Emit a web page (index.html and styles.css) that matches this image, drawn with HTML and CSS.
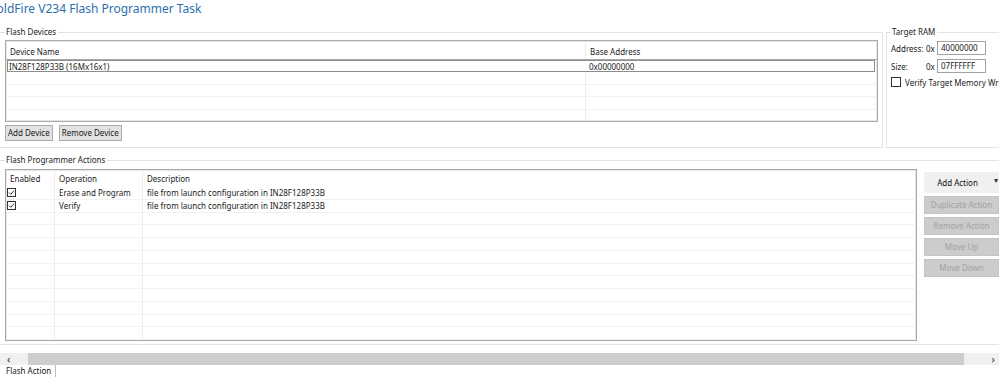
FILE: index.html
```html
<!DOCTYPE html>
<html>
<head>
<meta charset="utf-8">
<link rel="stylesheet" href="styles.css">
</head>
<body>
<div class="page">
  <h1 class="title">ColdFire V234 Flash Programmer Task</h1>
  <div class="top">
    <fieldset class="group devices">
      <legend>Flash Devices</legend>
      <div class="grid dev-grid">
        <div class="ghead">
          <div class="c c-name">Device Name</div>
          <div class="c c-addr">Base Address</div>
        </div>
        <div class="gbody">
          <div class="row focus"><div class="c c-name">IN28F128P33B (16Mx16x1)</div><div class="c c-addr">0x00000000</div></div>
          <div class="row"><div class="c c-name"></div><div class="c c-addr"></div></div>
          <div class="row"><div class="c c-name"></div><div class="c c-addr"></div></div>
          <div class="row"><div class="c c-name"></div><div class="c c-addr"></div></div>
          <div class="row"><div class="c c-name"></div><div class="c c-addr"></div></div>
        </div>
      </div>
      <div class="btns">
        <button class="btn">Add Device</button>
        <button class="btn">Remove Device</button>
      </div>
    </fieldset>
    <fieldset class="group ram">
      <legend>Target RAM</legend>
      <div class="field"><span class="lbl">Address:</span><span class="px">0x</span><span class="input">40000000</span></div>
      <div class="field"><span class="lbl">Size:</span><span class="px">0x</span><span class="input">07FFFFFF</span></div>
      <label class="check"><span class="box"></span>Verify Target Memory Write</label>
    </fieldset>
  </div>

  <fieldset class="group actions">
    <legend>Flash Programmer Actions</legend>
    <div class="act-wrap">
      <div class="grid act-grid">
        <div class="ghead">
          <div class="c c-en">Enabled</div>
          <div class="c c-op">Operation</div>
          <div class="c c-desc">Description</div>
        </div>
        <div class="gbody">
          <div class="row"><div class="c c-en"><svg class="cb" width="9" height="9" viewBox="0 0 9 9"><rect x="0.5" y="0.5" width="8" height="8" fill="#fff" stroke="#333"/><path d="M2 4.5 L3.8 6.3 L7 2.6" fill="none" stroke="#333" stroke-width="1"/></svg></div><div class="c c-op">Erase and Program</div><div class="c c-desc">file from launch configuration in IN28F128P33B</div></div>
          <div class="row"><div class="c c-en"><svg class="cb" width="9" height="9" viewBox="0 0 9 9"><rect x="0.5" y="0.5" width="8" height="8" fill="#fff" stroke="#333"/><path d="M2 4.5 L3.8 6.3 L7 2.6" fill="none" stroke="#333" stroke-width="1"/></svg></div><div class="c c-op">Verify</div><div class="c c-desc">file from launch configuration in IN28F128P33B</div></div>
          <div class="row"><div class="c c-en"></div><div class="c c-op"></div><div class="c c-desc"></div></div>
          <div class="row"><div class="c c-en"></div><div class="c c-op"></div><div class="c c-desc"></div></div>
          <div class="row"><div class="c c-en"></div><div class="c c-op"></div><div class="c c-desc"></div></div>
          <div class="row"><div class="c c-en"></div><div class="c c-op"></div><div class="c c-desc"></div></div>
          <div class="row"><div class="c c-en"></div><div class="c c-op"></div><div class="c c-desc"></div></div>
          <div class="row"><div class="c c-en"></div><div class="c c-op"></div><div class="c c-desc"></div></div>
          <div class="row"><div class="c c-en"></div><div class="c c-op"></div><div class="c c-desc"></div></div>
          <div class="row"><div class="c c-en"></div><div class="c c-op"></div><div class="c c-desc"></div></div>
          <div class="row"><div class="c c-en"></div><div class="c c-op"></div><div class="c c-desc"></div></div>
          <div class="row"><div class="c c-en"></div><div class="c c-op"></div><div class="c c-desc"></div></div>
        </div>
      </div>
      <div class="side">
        <button class="sbtn primary">Add Action<span class="caret">&#9662;</span></button>
        <button class="sbtn dis">Duplicate Action</button>
        <button class="sbtn dis">Remove Action</button>
        <button class="sbtn dis">Move Up</button>
        <button class="sbtn dis">Move Down</button>
      </div>
    </div>
  </fieldset>

  <div class="hscroll">
    <div class="arrow left">&lsaquo;</div>
    <div class="thumb"></div>
    <div class="arrow right">&rsaquo;</div>
  </div>
  <div class="tabs">
    <div class="tab">Flash Action</div>
  </div>
</div>
</body>
</html>
```

FILE: styles.css
```css
* { box-sizing: border-box; }
html, body { margin: 0; padding: 0; background: #fff; }
body {
  font-family: "Noto Sans", "Open Sans", sans-serif;
  font-size: 8px;
  color: #1a1a1a;
  width: 999px;
  height: 378px;
  overflow: hidden;
}
.page {
  width: 999px;
  height: 378px;
  overflow: hidden;
  display: flex;
  flex-direction: column;
}
.title {
  margin: 0 0 0 -11px;
  height: 26px;
  font-size: 12px;
  line-height: 17px;
  font-weight: normal;
  color: #2d6fae;
  white-space: nowrap;
}

.group {
  margin: 0;
  border: 1px solid #e2e2e2;
  padding: 0;
  min-width: 0;
}
.group legend {
  padding: 0 2px 0 1px;
  line-height: 12px;
  height: 12px;
  color: #1a1a1a;
}

.top { display: flex; gap: 3px; }
.devices {
  width: 883px;
  border-left: none;
  padding: 2px 4px 6px 5px;
}
.ram {
  flex: 1;
  border-right: none;
  padding: 2px 0 0 4px;
  white-space: nowrap;
  overflow: hidden;
}

.grid {
  border: 1px solid #a9a9a9;
  box-shadow: inset 0 0 0 1px #e6e6e6;
  background: #fff;
  display: flex;
  flex-direction: column;
  overflow: hidden;
}
.ghead { display: flex; flex: none; }
.gbody { display: flex; flex-direction: column; }
.row { display: flex; flex: none; border-bottom: 1px solid #f1f1f1; }
.c {
  padding-left: 4px;
  white-space: nowrap;
  overflow: hidden;
  border-right: 1px solid #ececec;
}
.c:last-child { border-right: none; flex: 1; }

.dev-grid { height: 82px; }
.dev-grid .ghead { height: 19px; line-height: 19px; border-bottom: 1px solid #a9a9a9; padding-top: 1px; }
.dev-grid .row { height: 12.7px; line-height: 11px; }
.dev-grid .row.focus { border: 1px solid #8c8c8c; margin: 0 2px 0 1px; height: 12px; }
.dev-grid .c-name { width: 580px; }
.dev-grid .focus .c-name { width: 579px; border-right-color: transparent; padding-left: 1px; }
.dev-grid .focus .c-addr { padding-left: 2px; }

.btns { display: flex; gap: 6px; margin-top: 3px; }
.btn {
  font: inherit;
  color: #1a1a1a;
  background: #e1e1e1;
  border: 1px solid #adadad;
  height: 16px;
  padding: 0 2px;
  line-height: 14px;
}

.field { display: flex; align-items: center; height: 14px; margin-top: 1px; white-space: nowrap; }
.field + .field { margin-top: 4px; }
.lbl { width: 35px; flex: none; }
.px { width: 11px; flex: none; }
.input {
  width: 49px;
  height: 14px;
  line-height: 12px;
  border: 1px solid #a3a3a3;
  padding-left: 3px;
  flex: none;
}
.check { display: flex; align-items: center; gap: 4px; margin-top: 4px; height: 10px; }
.box { width: 10px; height: 10px; border: 1px solid #333; background: #fff; flex: none; }

.actions {
  margin-top: 6px;
  border-left: none;
  border-right: none;
  padding: 3px 0 3px 5px;
}
.act-wrap { display: flex; gap: 7px; align-items: flex-start; }
.act-grid { width: 912px; height: 172px; flex: none; }
.act-grid .ghead { height: 17px; line-height: 17px; }
.act-grid .row { height: 12.75px; line-height: 11px; }
.act-grid .c-en { width: 49px; padding-left: 0; }
.act-grid .ghead .c-en { padding-left: 4px; }
.act-grid .c-op { width: 88px; }
.cb { display: block; margin: 1px 0 0 1px; }

.side { display: flex; flex-direction: column; gap: 3px; margin-top: 3px; width: 76px; }
.sbtn {
  font: inherit;
  height: 18px;
  border: 1px solid #c4c4c4;
  background: #cccccc;
  color: #a2a2a2;
  padding: 0;
  text-align: center;
  line-height: 16px;
  white-space: nowrap;
}
.sbtn.primary {
  height: 21px;
  border: none;
  background: #f0f0f0;
  color: #111;
  position: relative;
  padding-right: 8px;
}
.caret { position: absolute; right: 1px; top: 0; font-size: 8px; color: #333; }

.hscroll {
  margin-top: 8px;
  height: 12px;
  display: flex;
  flex: none;
  background: #f0f0f0;
}
.arrow {
  font-size: 11px;
  line-height: 11px;
  color: #333;
  background: #f0f0f0;
}
.arrow.left { width: 28px; padding-left: 7px; }
.arrow.right { width: 35px; text-align: right; padding-right: 4px; }
.thumb { flex: 1; background: #cdcdcd; }

.tabs { display: flex; height: 12px; flex: none; }
.tab {
  padding: 0 4px 0 6px;
  line-height: 12px;
  border-right: 1px solid #bdbdbd;
  white-space: nowrap;
}
```
